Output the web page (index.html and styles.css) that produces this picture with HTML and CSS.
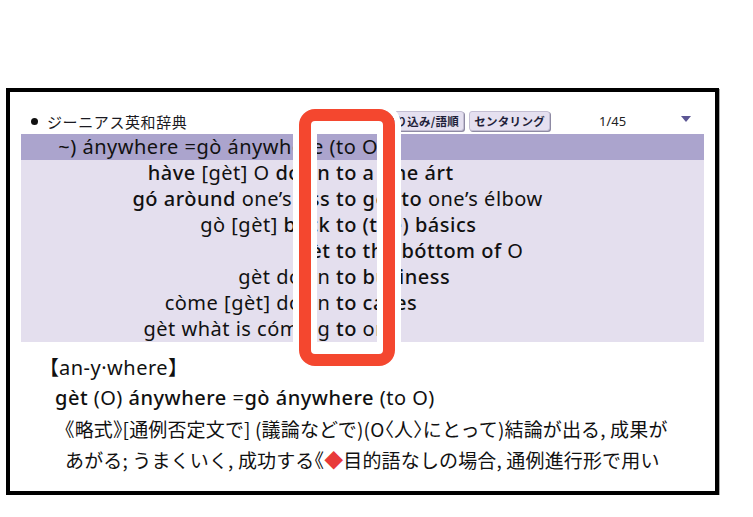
FILE: index.html
```html
<!DOCTYPE html>
<html lang="ja">
<head>
<meta charset="utf-8">
<link rel="stylesheet" href="styles.css">
</head>
<body>
<div class="page">
  <div class="frame">
    <div class="header">
      <div class="title"><span class="dot"></span>ジーニアス英和辞典</div>
      <div class="buttons">
        <span class="btn">絞り込み/語順</span>
        <span class="btn">センタリング</span>
      </div>
      <div class="count">1/45</div>
      <div class="tri"></div>
    </div>
    <div class="list">
      <div class="row sel"><span class="l">~) ánywhere =gò ánywhere (</span><span class="r">to O)</span></div>
      <div class="row"><span class="l"><b>hàve</b> [gèt] O <b>dówn</b>&nbsp;</span><span class="r"><b>to a fine árt</b></span></div>
      <div class="row"><span class="l"><b>gó aròund</b> one’s <b>ass</b>&nbsp;</span><span class="r"><b>to gèt to</b> one’s élbow</span></div>
      <div class="row"><span class="l">gò [gèt] <b>báck</b>&nbsp;</span><span class="r"><b>to (the) básics</b></span></div>
      <div class="row"><span class="l"><b>gèt</b>&nbsp;</span><span class="r"><b>to the bóttom of</b> O</span></div>
      <div class="row"><span class="l">gèt dówn&nbsp;</span><span class="r"><b>to búsiness</b></span></div>
      <div class="row"><span class="l">còme [gèt] dówn&nbsp;</span><span class="r"><b>to cáses</b></span></div>
      <div class="row"><span class="l">gèt whàt is cóming&nbsp;</span><span class="r"><b>to</b> one</span></div>
    </div>
    <div class="entry">
      <div class="hw"><span class="jb">【</span>an-y·where<span class="jb">】</span></div>
      <div class="phrase"><b>gèt</b> (O) <b>ánywhere</b> =<b>gò ánywhere</b> (to O)</div>
      <div class="jp">《略式》[通例否定文で] (議論などで)(O〈人〉にとって)結論が出る, 成果が</div>
      <div class="jp">あがる; うまくいく, 成功する《<span class="red">◆</span>目的語なしの場合, 通例進行形で用い</div>
    </div>
    <div class="lens"></div>
  </div>
</div>
</body>
</html>
```

FILE: styles.css
```css
html, body {
  margin: 0;
  padding: 0;
  background: #fff;
}
body {
  font-family: "Noto Sans", "Noto Sans CJK JP", sans-serif;
  color: #111;
}
.page {
  padding: 88px 0 0 6px;
}
.frame {
  position: relative;
  width: 713px;
  height: 407px;
  box-sizing: border-box;
  border: 4px solid #000;
  box-shadow: 1px 1px 0 #aaa;
  padding: 0 11px;
}
.header {
  height: 42px;
  box-sizing: border-box;
  padding-top: 16px;
  display: flex;
  align-items: center;
}
.header > * {
  height: 20px;
}
.title {
  flex: 1;
  display: flex;
  align-items: center;
  padding-left: 10px;
  font-family: "Noto Sans CJK JP", sans-serif;
  font-size: 15px;
  letter-spacing: 0.6px;
  color: #1a1a22;
}
.dot {
  width: 7px;
  height: 7px;
  border-radius: 50%;
  background: #111;
  margin-right: 9px;
}
.buttons {
  display: flex;
  gap: 5px;
}
.btn {
  display: flex;
  align-items: center;
  box-sizing: border-box;
  height: 20px;
  padding: 0 4px;
  background: #e5e0f0;
  border: 1px solid #c3bed3;
  border-radius: 3px;
  box-shadow: 1px 1px 0 #8e8aa3;
  font-family: "Noto Sans CJK JP", sans-serif;
  font-size: 11.5px;
  letter-spacing: 0.3px;
  font-weight: 700;
  color: #1f1f3a;
}
.count {
  display: flex;
  align-items: center;
  margin-left: 49px;
  width: 30px;
  font-size: 13px;
  color: #222;
}
.tri {
  margin-left: 52px;
  margin-right: 13px;
  display: flex;
  align-items: center;
}
.tri::before {
  content: "";
  width: 0;
  height: 0;
  border-left: 5px solid transparent;
  border-right: 5px solid transparent;
  border-top: 6px solid #5c5694;
  margin-top: -5px;
}
.list {
  background: #e4dfee;
}
.row {
  display: grid;
  grid-template-columns: 315px 1fr;
  height: 26px;
  line-height: 26px;
  font-size: 20px;
  letter-spacing: 0.5px;
  white-space: nowrap;
  overflow: hidden;
}
.row.sel {
  background: #aba4cd;
}
.row .l {
  text-align: right;
  overflow: hidden;
}
.row b, .phrase b {
  font-weight: 500;
}
.entry {
  padding-top: 9px;
  padding-left: 26px;
}
.hw {
  height: 31px;
  line-height: 31px;
  font-size: 20px;
  letter-spacing: 0.5px;
  padding-left: 2px;
}
.jb {
  font-family: "Noto Sans CJK JP", sans-serif;
  font-feature-settings: "halt";
  letter-spacing: 0;
}
.phrase {
  height: 31px;
  line-height: 31px;
  font-size: 20px;
  letter-spacing: 0.5px;
  padding-left: 8px;
}
.jp {
  height: 31px;
  line-height: 31px;
  font-family: "Noto Sans CJK JP", sans-serif;
  font-feature-settings: "halt";
  font-size: 19px;
  letter-spacing: 0.15px;
  padding-left: 18px;
  white-space: nowrap;
}
.red {
  color: #e83a3a;
}
.lens {
  position: absolute;
  left: 289px;
  top: 17px;
  width: 96px;
  height: 257px;
  box-sizing: border-box;
  border: 12px solid #f4472f;
  border-radius: 16px;
  box-shadow: 0 0 0 6px #fff, inset 0 0 0 6px #fff;
}
```
